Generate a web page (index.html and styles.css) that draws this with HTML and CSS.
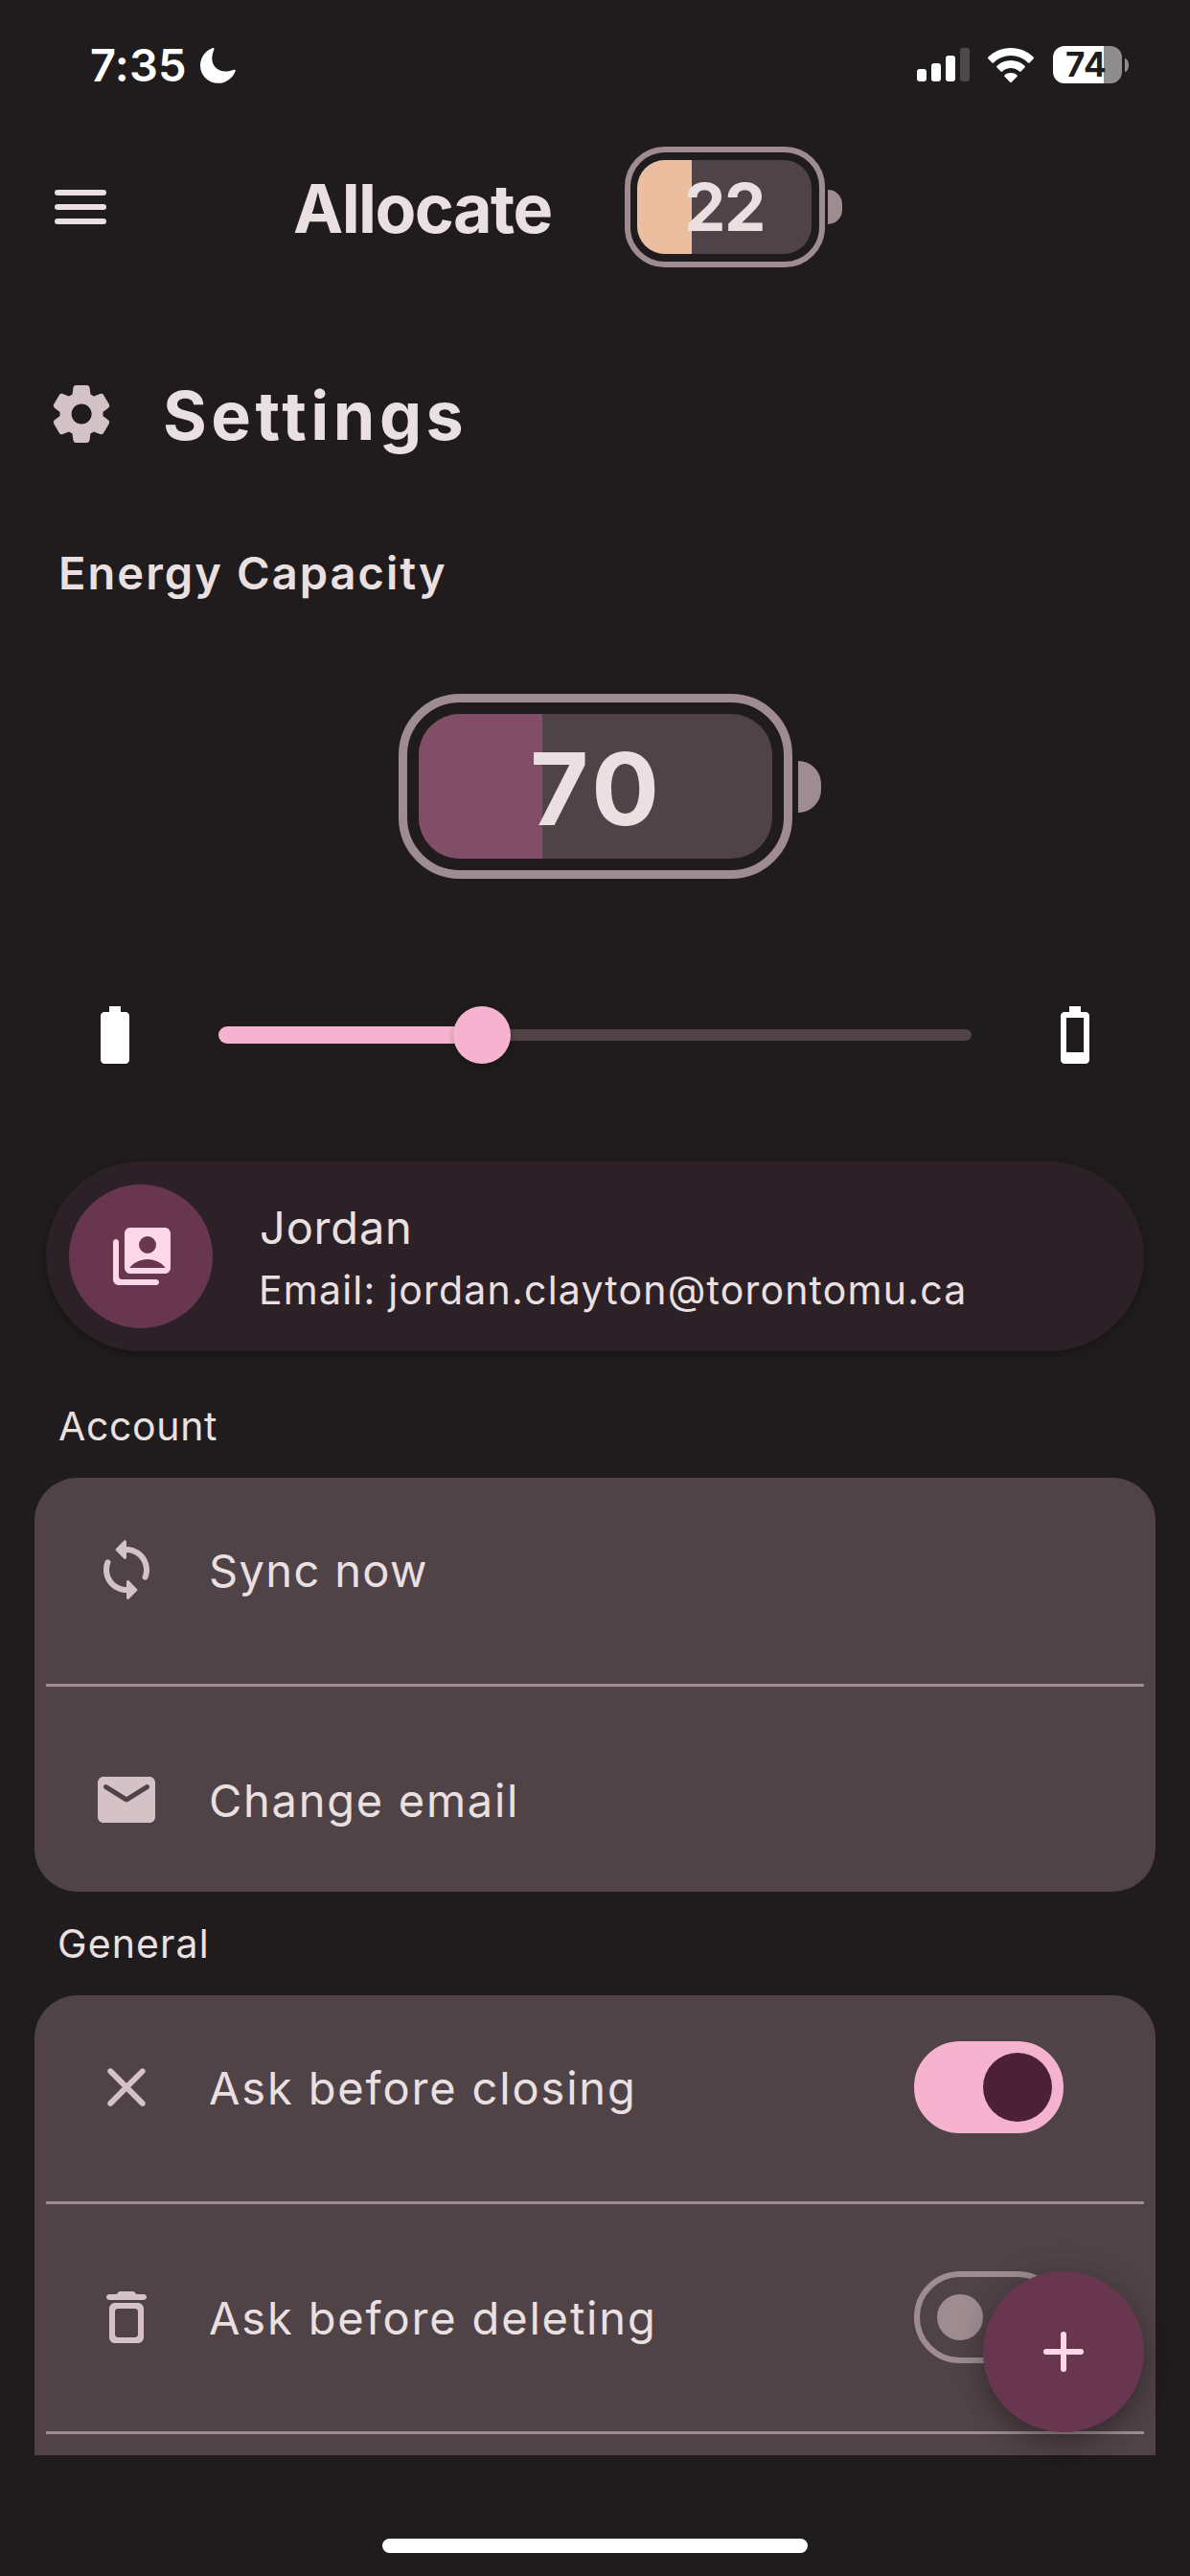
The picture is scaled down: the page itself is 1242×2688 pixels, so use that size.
FILE: index.html
```html
<!DOCTYPE html>
<html lang="en">
<head>
<meta charset="utf-8">
<title>Allocate – Settings</title>
<link rel="stylesheet" href="styles.css">
</head>
<body>
<div class="screen">
  <div class="status">
    <span class="status-time">7:35</span>
    <svg class="status-moon" viewBox="0 0 37 37"><path d="M12.6.2c1.400-.5 2.300.3 1.800 1.500C11.400 9 11.600 15.500 15.600 20c4.600 5 12 5.800 19.500 2.800 1.200-.4 2 .4 1.500 1.600C33.700 31.500 27 36.800 18.800 36.800 8.400 36.800 0 28.800 0 18.500 0 10 5.200 2.900 12.600.2z"/></svg>
    <div class="status-right">
      <svg class="signal" viewBox="0 0 55 36"><rect x="0" y="22" width="10" height="13" rx="3"/><rect x="15" y="16" width="10" height="19" rx="3"/><rect x="30" y="8" width="10" height="27" rx="3"/><rect class="dim" x="45" y="0" width="10" height="35" rx="3"/></svg>
      <svg class="wifi" viewBox="0 0 48 36"><path d="M24 0c9.200 0 17.600 3.600 23.600 9.600.5.500.5 1.200 0 1.700l-4 4.100c-.5.500-1.200.5-1.700 0C37.200 10.800 30.900 8 24 8S10.800 10.800 6.100 15.400c-.5.500-1.200.5-1.700 0l-4-4.100c-.5-.5-.5-1.200 0-1.700C6.400 3.600 14.800 0 24 0z"/><path d="M24 13c5.600 0 10.700 2.200 14.500 5.700.5.500.5 1.200 0 1.700l-4 4.100c-.5.500-1.200.5-1.700 0A12.900 12.900 0 0 0 24 21c-3.400 0-6.500 1.300-8.800 3.500-.5.500-1.200.5-1.700 0l-4-4.100c-.5-.5-.5-1.200 0-1.700C13.300 15.200 18.400 13 24 13z"/><path d="M24 26c2.500 0 4.700.8 6.400 2.300.5.500.5 1.200 0 1.700l-5.600 5.700c-.4.400-1.200.4-1.600 0L17.600 30c-.5-.5-.5-1.200 0-1.700C19.300 26.800 21.500 26 24 26z"/></svg>
      <div class="phone-battery"><div class="phone-battery-body">74</div><div class="phone-battery-cap"></div></div>
    </div>
  </div>

  <header class="header">
    <div class="menu"><i></i><i></i><i></i></div>
    <h1 class="brand">Allocate</h1>
    <div class="energy energy--small">
      <div class="energy-shell"><div class="energy-cell"><div class="energy-fill" style="width:31.4%"></div><span class="energy-value">22</span></div></div>
      <div class="energy-cap"></div>
    </div>
  </header>

  <main class="content">
    <div class="title-row">
      <svg class="icon" viewBox="0 0 24 24"><path d="M19.5 12c0-.23-.01-.45-.03-.68l1.860-1.410c.4-.3.51-.86.26-1.300l-1.870-3.230c-.25-.44-.79-.62-1.250-.42l-2.150.91c-.37-.26-.76-.49-1.170-.68l-.29-2.310c-.06-.5-.49-.88-.99-.88h-3.730c-.51 0-.94.38-1 .88l-.29 2.310c-.41.19-.8.42-1.170.68l-2.150-.91c-.46-.2-1-.02-1.250.42L2.410 8.620c-.25.44-.14.99.26 1.300l1.860 1.410c-.02.22-.03.44-.03.67s.01.45.03.68l-1.860 1.410c-.4.3-.51.86-.26 1.300l1.870 3.230c.25.44.79.62 1.250.42l2.150-.91c.37.26.76.49 1.170.68l.29 2.310c.06.5.49.88.99.88h3.730c.5 0 .93-.38.99-.88l.29-2.310c.41-.19.8-.42 1.170-.68l2.150.91c.46.2 1 .02 1.250-.42l1.870-3.230c.25-.44.14-.99-.26-1.300l-1.860-1.410c.03-.23.04-.45.04-.68zm-7.460 3.500c-1.930 0-3.500-1.570-3.500-3.500s1.570-3.500 3.500-3.500 3.500 1.570 3.500 3.500-1.570 3.500-3.500 3.500z"/></svg>
      <h2 class="title">Settings</h2>
    </div>
    <h3 class="capacity-label">Energy Capacity</h3>

    <div class="energy energy--large">
      <div class="energy-shell"><div class="energy-cell"><div class="energy-fill" style="width:35%"></div><span class="energy-value">70</span></div></div>
      <div class="energy-cap"></div>
    </div>

    <div class="slider-row">
      <svg class="cell-icon" viewBox="0 0 24 24"><path d="M15.670 4H14V2h-4v2H8.330C7.600 4 7 4.600 7 5.330v15.330C7 21.400 7.600 22 8.330 22h7.330c.74 0 1.340-.6 1.340-1.330V5.330C17 4.600 16.400 4 15.670 4z"/></svg>
      <div class="slider">
        <div class="slider-active" style="width:35%"></div>
        <div class="slider-rest"></div>
        <div class="slider-thumb" style="left:35%"></div>
      </div>
      <svg class="cell-icon" viewBox="0 0 24 24"><path fill-rule="evenodd" d="M15.670 4H14V2h-4v2H8.330C7.600 4 7 4.600 7 5.330v15.330C7 21.400 7.600 22 8.330 22h7.330c.74 0 1.340-.6 1.340-1.330V5.330C17 4.600 16.400 4 15.670 4zM9 6h6v12H9z"/></svg>
    </div>

    <section class="profile">
      <div class="avatar"><svg class="icon" viewBox="0 0 24 24"><path d="M3 6c-.55 0-1 .45-1 1v13c0 1.100.9 2 2 2h13c.55 0 1-.45 1-1s-.45-1-1-1H5c-.55 0-1-.45-1-1V7c0-.55-.45-1-1-1z"/><path fill-rule="evenodd" d="M20 2H8c-1.100 0-2 .9-2 2v12c0 1.100.9 2 2 2h12c1.100 0 2-.9 2-2V4c0-1.100-.9-2-2-2zM14 5a3 3 0 1 1 0 6 3 3 0 0 1 0-6zM7.760 16C9.140 14.180 11.430 13 14 13s4.860 1.180 6.240 3z"/></svg></div>
      <div class="profile-text">
        <div class="profile-name">Jordan</div>
        <div class="profile-mail">Email: jordan.clayton@torontomu.ca</div>
      </div>
    </section>

    <h4 class="group-label group-label--account">Account</h4>
    <section class="card">
      <div class="row">
        <svg class="icon" viewBox="0 0 24 24"><path d="M12 4V2.210c0-.45-.54-.67-.85-.35l-2.800 2.790c-.2.2-.2.51 0 .71l2.790 2.790c.32.31.86.09.86-.36V6c3.310 0 6 2.690 6 6 0 .79-.15 1.560-.44 2.250-.15.36-.04.77.23 1.040.51.51 1.370.33 1.640-.34.37-.91.57-1.910.57-2.950 0-4.420-3.580-8-8-8zm0 14c-3.310 0-6-2.690-6-6 0-.79.15-1.560.44-2.250.15-.36.04-.77-.23-1.040-.51-.51-1.370-.33-1.640.34C4.200 9.960 4 10.960 4 12c0 4.420 3.580 8 8 8v1.790c0 .45.54.67.85.35l2.790-2.790c.2-.2.2-.51 0-.71l-2.790-2.790c-.31-.31-.85-.09-.85.36V18z"/></svg>
        <span class="row-label row-label--short">Sync now</span>
      </div>
      <div class="divider"></div>
      <div class="row">
        <svg class="icon" viewBox="0 0 24 24"><path d="M20 4H4c-1.100 0-2 .9-2 2v12c0 1.100.9 2 2 2h16c1.100 0 2-.9 2-2V6c0-1.100-.9-2-2-2zm-.4 4.250l-7.070 4.420c-.32.2-.74.2-1.060 0L4.400 8.250c-.25-.16-.4-.43-.4-.72 0-.67.73-1.070 1.300-.72L12 11l6.700-4.190c.57-.35 1.300.05 1.300.72 0 .29-.15.56-.4.72z"/></svg>
        <span class="row-label">Change email</span>
      </div>
    </section>

    <h4 class="group-label">General</h4>
    <section class="card">
      <div class="row">
        <svg class="icon" viewBox="0 0 24 24"><path d="M18.300 5.710c-.39-.39-1.020-.39-1.410 0L12 10.590 7.110 5.700c-.39-.39-1.020-.39-1.410 0-.39.39-.39 1.020 0 1.410L10.590 12 5.700 16.890c-.39.39-.39 1.020 0 1.410.39.39 1.020.39 1.410 0L12 13.410l4.890 4.890c.39.39 1.020.39 1.410 0 .39-.39.39-1.020 0-1.410L13.410 12l4.890-4.890c.38-.38.38-1.020 0-1.400z"/></svg>
        <span class="row-label row-label--long">Ask before closing</span>
        <div class="switch switch--on"></div>
      </div>
      <div class="divider"></div>
      <div class="row">
        <svg class="icon" viewBox="0 0 24 24"><path d="M6 19c0 1.100.9 2 2 2h8c1.100 0 2-.9 2-2V9c0-1.100-.9-2-2-2H8c-1.100 0-2 .9-2 2v10zM9 9h6c.55 0 1 .45 1 1v8c0 .55-.45 1-1 1H9c-.55 0-1-.45-1-1v-8c0-.55.45-1 1-1zm6.500-5l-.71-.71c-.18-.18-.44-.29-.7-.29H9.910c-.26 0-.52.11-.7.29L8.500 4H6c-.55 0-1 .45-1 1s.45 1 1 1h12c.55 0 1-.45 1-1s-.45-1-1-1h-2.500z"/></svg>
        <span class="row-label row-label--long">Ask before deleting</span>
        <div class="switch"></div>
      </div>
      <div class="divider"></div>
      <div class="row"></div>
    </section>
  </main>

  <div class="home-area"><div class="home-bar"></div></div>
  <button class="fab" aria-label="Add"><svg viewBox="0 0 42 42"><path d="M21 3v36M3 21h36"/></svg></button>
</div>
</body>
</html>
```
FILE: styles.css
```css
:root {
  --bg: #201c1d;
  --surface: #504347;
  --outline: #9e8c91;
  --text: #ebe0e1;
  --icon: #d5c2c7;
  --primary: #f5b3cf;
  --container: #69364f;
}

* { box-sizing: border-box; }
body { margin: 0; }
h1, h2, h3, h4 { margin: 0; }
svg { display: block; flex: none; }

.screen {
  position: relative;
  display: flex;
  flex-direction: column;
  width: 1242px;
  height: 2688px;
  overflow: hidden;
  background: var(--bg);
  color: var(--text);
  font-family: Inter, "Liberation Sans", sans-serif;
  white-space: nowrap;
}

/* status bar */
.status {
  display: flex;
  align-items: center;
  flex: none;
  height: 136px;
  padding: 0 64px 0 94px;
  color: #fff;
}
.status-time { font-size: 47px; font-weight: 600; line-height: 60px; letter-spacing: .2px; }
.status-moon { width: 37px; height: 37px; margin-left: 14px; fill: #fff; }
.status-right { display: flex; align-items: center; margin-left: auto; }
.signal { width: 55px; height: 36px; fill: #fff; }
.signal .dim { fill: #4d494a; }
.wifi { width: 48px; height: 36px; margin-left: 19px; margin-top: -1px; fill: #fff; }
.phone-battery { display: flex; align-items: center; margin: -1px 0 0 20px; }
.phone-battery-body {
  width: 72px;
  height: 39px;
  padding-left: 13px;
  border-radius: 12px;
  background: linear-gradient(90deg, #fff 53px, #8f8d8e 53px);
  color: var(--bg);
  font-size: 35px;
  font-weight: 700;
  line-height: 39px;
  letter-spacing: .6px;
}
.phone-battery-cap { width: 4px; height: 14px; margin-left: 3px; border-radius: 0 4px 4px 0 / 0 7px 7px 0; background: #8f8d8e; }

/* app bar */
.header {
  display: flex;
  align-items: center;
  flex: none;
  height: 160px;
  padding-left: 57px;
}
.menu { display: flex; flex-direction: column; gap: 9px; width: 54px; }
.menu i { height: 6px; border-radius: 3px; background: var(--text); }
.brand { width: 345.5px; margin: 3px 0 0 195px; font-size: 70px; font-weight: 700; line-height: 84px; letter-spacing: -1.6px; }

/* energy gauge */
.energy { display: flex; align-items: center; }
.energy-shell { border: 9px solid var(--outline); }
.energy-cell {
  position: relative;
  display: flex;
  align-items: center;
  justify-content: center;
  height: 100%;
  overflow: hidden;
  background: var(--surface);
}
.energy-fill { position: absolute; inset: 0 auto 0 0; }
.energy-value { position: relative; }
.energy-cap { background: var(--outline); }

.energy--small .energy-shell { width: 209px; height: 126px; padding: 8px 7.5px; border-width: 6px; border-radius: 42px; }
.energy--small .energy-cell { border-radius: 29px; }
.energy--small .energy-fill { background: #ebbea0; }
.energy--small .energy-value { font-size: 69px; font-weight: 700; line-height: 84px; letter-spacing: -1.4px; }
.energy--small .energy-cap { width: 15px; height: 36px; margin-left: 3px; border-radius: 0 15px 15px 0; }

.energy--large { margin: 96px 0 0 415.5px; }
.energy--large .energy-shell { width: 411px; height: 193px; padding: 12px; border-radius: 64px; }
.energy--large .energy-cell { border-radius: 43px; }
.energy--large .energy-fill { background: #824d66; }
.energy--large .energy-value { padding-top: 5px; font-size: 105px; font-weight: 700; line-height: 120px; letter-spacing: 4.6px; text-indent: 4px; }
.energy--large .energy-cap { width: 24px; height: 54px; margin-left: 6px; border-radius: 0 24px 24px 0; }

/* scrolling content */
.content { height: 2266px; overflow: hidden; }
.icon { width: 72px; height: 72px; fill: var(--icon); }

.title-row { display: flex; align-items: center; height: 120px; margin-top: 76px; padding-left: 49px; }
.title { margin: 3px 0 0 49px; font-size: 70px; font-weight: 700; line-height: 84px; letter-spacing: 4.5px; }
.capacity-label { margin: 76px 0 0 61px; font-size: 47px; font-weight: 600; line-height: 60px; letter-spacing: 2.06px; }

.slider-row { display: flex; align-items: center; height: 72px; margin-top: 127px; padding: 0 84px; }
.cell-icon { width: 72px; height: 72px; fill: #fff; }
.slider { position: relative; display: flex; align-items: center; width: 786px; margin: 0 auto; }
.slider-active { height: 18px; border-radius: 9px 0 0 9px; background: var(--primary); }
.slider-rest { flex: 1; height: 12px; border-radius: 0 6px 6px 0; background: var(--surface); }
.slider-thumb {
  position: absolute;
  width: 60px;
  height: 60px;
  margin-left: -30px;
  border-radius: 50%;
  background: var(--primary);
  box-shadow: 0 3px 6px rgba(0, 0, 0, .25);
}

.profile {
  display: flex;
  align-items: center;
  height: 198px;
  margin: 96px 48px 0;
  padding-left: 24px;
  border-radius: 99px;
  background: #2b2127;
  box-shadow: 0 3px 8px rgba(0, 0, 0, .3);
}
.avatar { display: flex; align-items: center; justify-content: center; width: 150px; height: 150px; padding-left: 2px; border-radius: 50%; background: var(--container); }
.avatar .icon { fill: #ffd8e7; }
.profile-text { margin: 1px 0 0 48px; }
.profile-name { margin-left: 1px; font-size: 47px; line-height: 68px; letter-spacing: .8px; }
.profile-mail { font-size: 41px; line-height: 62px; letter-spacing: 1.2px; }

.group-label { margin: 24px 0 0 60px; font-size: 41px; font-weight: 400; line-height: 60px; letter-spacing: 1.1px; }
.group-label--account { margin: 48px 0 0 61px; letter-spacing: .64px; }

.card { margin: 24px 36px 0; border-radius: 45px; background: var(--surface); }
.row { display: flex; align-items: center; height: 192px; padding: 0 96px 0 60px; }
.row-label { margin: 2px 0 0 50px; font-size: 47px; line-height: 60px; letter-spacing: 1.72px; }
.row-label--short { letter-spacing: 1.36px; }
.row-label--long { letter-spacing: 1.85px; }
.divider { height: 48px; padding: 22.5px 12px; }
.divider::before { content: ""; display: block; height: 3px; background: var(--outline); }

.switch {
  display: flex;
  align-items: center;
  width: 156px;
  height: 96px;
  margin-left: auto;
  padding-left: 18px;
  border: 6px solid var(--outline);
  border-radius: 48px;
}
.switch::before { content: ""; width: 48px; height: 48px; border-radius: 50%; background: var(--outline); }
.switch--on { justify-content: flex-end; padding: 0 6px 0 0; border-color: var(--primary); background: var(--primary); }
.switch--on::before { width: 72px; height: 72px; background: #4c2036; }

.home-area { display: flex; justify-content: center; align-items: flex-end; height: 126px; padding-bottom: 24px; }
.home-bar { width: 444px; height: 15px; border-radius: 8px; background: #fff; }

.fab {
  position: absolute;
  right: 48px;
  bottom: 150px;
  display: flex;
  align-items: center;
  justify-content: center;
  width: 168px;
  height: 168px;
  padding: 0;
  border: 0;
  border-radius: 50%;
  background: var(--container);
  box-shadow: 0 12px 24px rgba(0, 0, 0, .26), 0 3px 36px rgba(0, 0, 0, .12);
}
.fab svg { width: 42px; height: 42px; fill: none; stroke: #ffd8e7; stroke-width: 6; stroke-linecap: round; }
```
